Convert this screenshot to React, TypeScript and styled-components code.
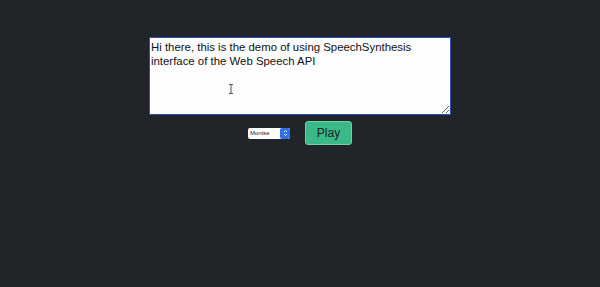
import React from 'react';
import styled, { createGlobalStyle } from 'styled-components';

const GlobalStyle = createGlobalStyle`
  html, body {
    margin: 0;
    padding: 0;
    background: #212529;
  }
  body {
    font-family: "Liberation Sans", Arial, sans-serif;
  }
`;

const Page = styled.div`
  height: 287px;
  display: flex;
  flex-direction: column;
  align-items: center;
  padding-top: 37px;
  box-sizing: border-box;
`;

const Field = styled.div`
  position: relative;
  width: 302px;
  height: 78px;
`;

const TextArea = styled.textarea`
  width: 100%;
  height: 100%;
  box-sizing: border-box;
  margin: 0;
  padding: 2px 1px;
  border: 1.5px solid #2d4fb0;
  background: #fdfdfd;
  color: #111;
  font-family: "Liberation Sans", Arial, sans-serif;
  font-size: 11.4px;
  line-height: 14px;
  outline: none;
`;

const Cursor = styled.svg`
  position: absolute;
  left: 79px;
  top: 47px;
  pointer-events: none;
`;

const Controls = styled.div`
  display: flex;
  align-items: center;
  gap: 15px;
  margin-top: 6px;
`;

const SelectBox = styled.div`
  display: inline-flex;
  align-items: center;
  width: 42px;
  height: 11px;
  background: #fff;
  border-radius: 2px;
  overflow: hidden;
`;

const Select = styled.select`
  appearance: none;
  -webkit-appearance: none;
  flex: 1;
  min-width: 0;
  border: 0;
  padding: 0 0 0 2px;
  margin: 0;
  height: 11px;
  background: transparent;
  font-family: "Liberation Sans", Arial, sans-serif;
  font-size: 6px;
  color: #222;
  outline: none;
`;

const Arrows = styled.div`
  width: 10px;
  height: 11px;
  border-radius: 2px;
  background: #2f6fe8;
  display: flex;
  align-items: center;
  justify-content: center;
`;

const PlayButton = styled.button`
  width: 47px;
  height: 24px;
  border: 1px solid #6fd1a6;
  border-radius: 3px;
  background: #3ab987;
  color: #15221c;
  font-family: "Liberation Sans", Arial, sans-serif;
  font-size: 12px;
  padding: 0;
  cursor: pointer;
`;

export default function App() {
  return (
    <>
      <GlobalStyle />
      <Page>
        <Field>
          <TextArea
            defaultValue="Hi there, this is the demo of using SpeechSynthesis interface of the Web Speech API"
          />
          <Cursor width="6" height="10" viewBox="0 0 6 10">
            <path d="M1 0.5h4M3 0.5v9M1 9.5h4" stroke="#555" strokeWidth="1" fill="none" />
          </Cursor>
        </Field>
        <Controls>
          <SelectBox>
            <Select defaultValue="Montse">
              <option value="Montse">Montse</option>
            </Select>
            <Arrows>
              <svg width="5" height="8" viewBox="0 0 5 8">
                <path d="M1 3L2.5 1.5L4 3M1 5L2.5 6.5L4 5" stroke="#fff" strokeWidth="0.9" fill="none" />
              </svg>
            </Arrows>
          </SelectBox>
          <PlayButton>Play</PlayButton>
        </Controls>
      </Page>
    </>
  );
}
